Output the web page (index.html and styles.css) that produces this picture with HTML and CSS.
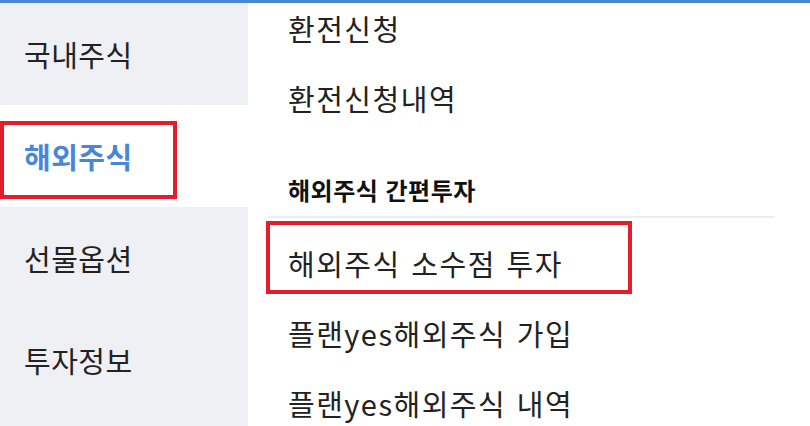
FILE: index.html
```html
<!DOCTYPE html>
<html lang="ko">
<head>
    <meta charset="UTF-8">
    <meta name="viewport" content="width=device-width, initial-scale=1.0">
    <title>전체메뉴</title>
    <link rel="stylesheet" href="styles.css">
</head>
<body>
    <div class="top-bar"></div>
    <div class="menu">
        <ul class="category-list">
            <li class="category">국내주식</li>
            <li class="category active"><span class="highlight">해외주식</span></li>
            <li class="category">선물옵션</li>
            <li class="category">투자정보</li>
        </ul>
        <div class="sub-menu">
            <ul class="sub-list">
                <li class="sub-item">환전신청</li>
                <li class="sub-item">환전신청내역</li>
            </ul>
            <h3 class="sub-title">해외주식 간편투자</h3>
            <ul class="sub-list after-title">
                <li class="sub-item marked">해외주식 소수점 투자</li>
                <li class="sub-item">플랜yes해외주식 가입</li>
                <li class="sub-item">플랜yes해외주식 내역</li>
            </ul>
        </div>
    </div>
</body>
</html>
```

FILE: styles.css
```css
body {
    margin: 0;
    font-family: "Noto Sans CJK KR", "Noto Sans", sans-serif;
    color: #222;
    background-color: #fff;
    height: 426px;
    overflow: hidden;
}
ul {
    list-style: none;
    margin: 0;
    padding: 0;
}
.top-bar {
    height: 3px;
    background-color: #4a86d8;
}
.menu {
    display: flex;
    height: 423px;
    overflow: hidden;
}

/* left categories */
.category-list {
    width: 248px;
    flex-shrink: 0;
    background-color: #eff0f4;
}
.category {
    height: 102px;
    display: flex;
    align-items: center;
    padding-left: 24px;
    font-size: 29px;
    letter-spacing: 0.5px;
}
.category.active {
    background-color: #fff;
    color: #4a86d8;
    font-weight: bold;
}
.category.active .highlight {
    position: relative;
}
.category.active .highlight::after {
    content: "";
    position: absolute;
    left: -24px;
    top: -14px;
    width: 177px;
    height: 78px;
    box-sizing: border-box;
    border: 4px solid #e31e2a;
}

/* right sub menu */
.sub-menu {
    flex: 1;
    padding: 0 35px 0 20px;
}
.sub-list {
    margin-top: -10px;
}
.sub-list.after-title {
    margin-top: 10px;
}
.sub-item {
    height: 70px;
    display: flex;
    align-items: center;
    padding-left: 20px;
    font-size: 29px;
    letter-spacing: 1.5px;
    word-spacing: 1px;
    position: relative;
}
.sub-item.marked::after {
    content: "";
    position: absolute;
    left: -2px;
    top: -7px;
    width: 366px;
    height: 73px;
    box-sizing: border-box;
    border: 4px solid #e31e2a;
}
.sub-title {
    margin: 42px 0 0;
    padding: 0 0 11px 20px;
    line-height: 30px;
    font-size: 24px;
    font-weight: bold;
    letter-spacing: 0.5px;
    color: #111;
    border-bottom: 2px solid #eeeef1;
}
```
